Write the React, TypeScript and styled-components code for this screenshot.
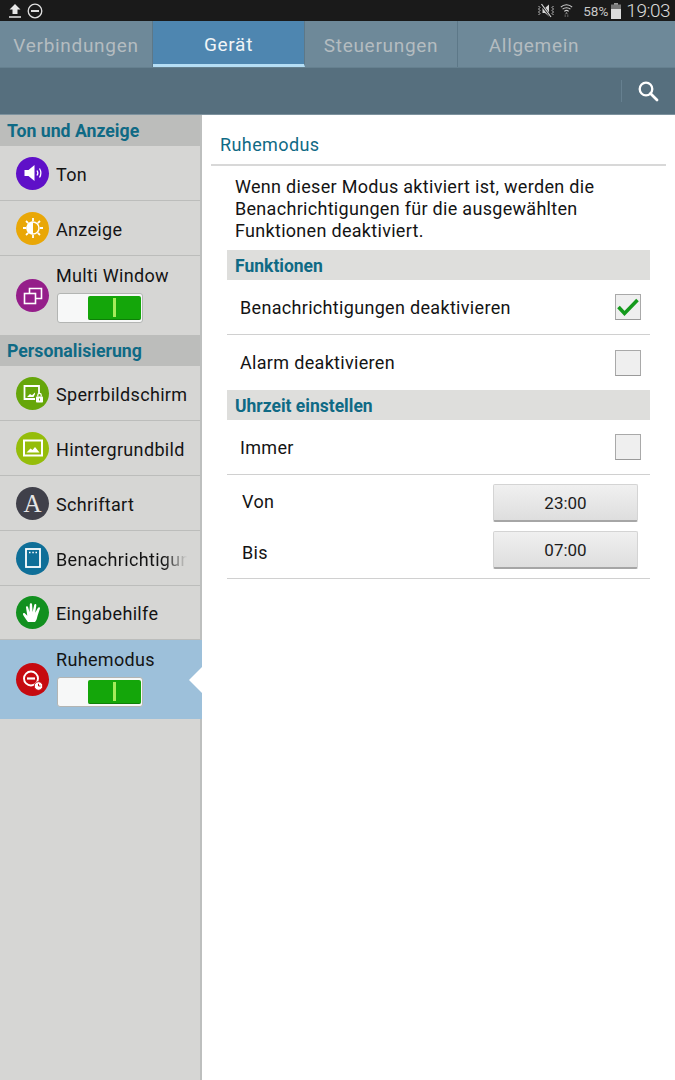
import React from "react";
import styled, { createGlobalStyle } from "styled-components";

const Global = createGlobalStyle`
  html, body { margin: 0; padding: 0; background: #fff; }
  #root { width: 675px; height: 1080px; overflow: hidden; }
  * { box-sizing: border-box; }
`;

const Page = styled.div`
  width: 675px;
  height: 1080px;
  display: flex;
  flex-direction: column;
  font-family: Roboto, "Liberation Sans", sans-serif;
  color: #1a1a1a;
`;

const StatusBar = styled.div`
  height: 21px;
  flex: none;
  background: #1a1a1a;
  display: flex;
  align-items: center;
  justify-content: space-between;
  padding: 0 5px 0 8px;
`;

const StatusGroup = styled.div<{ $gap: number }>`
  display: flex;
  align-items: center;
  gap: ${(p) => p.$gap}px;
`;

const Battery = styled.span`
  font-size: 13.5px;
  color: #c8c8c8;
  margin-left: 5px;
`;

const Clock = styled.span`
  font-size: 19px;
  letter-spacing: -0.5px;
  color: #dcdcdc;
  font-weight: 300;
`;

const TabBar = styled.div`
  height: 47px;
  flex: none;
  display: flex;
  background: #6e8999;
  border-bottom: 1px solid #65808f;
`;

const Tab = styled.div<{ $active?: boolean; $w: number }>`
  width: ${(p) => p.$w}px;
  flex: none;
  display: flex;
  align-items: center;
  justify-content: center;
  padding-top: 3px;
  font-size: 19px;
  letter-spacing: 0.7px;
  color: ${(p) => (p.$active ? "#f1f5f7" : "#b4bcc0")};
  background: ${(p) => (p.$active ? "#4e86b0" : "transparent")};
  border-right: 1px solid #5d7888;
  border-bottom: ${(p) => (p.$active ? "3px solid #b5def5" : "none")};
`;

const LastTab = styled(Tab)`
  border-right: none;
`;

const ActionBar = styled.div`
  height: 47px;
  flex: none;
  background: #566f7e;
  display: flex;
  align-items: center;
  justify-content: flex-end;
  border-bottom: 1px solid #7d929e;
  padding-right: 16px;
`;

const ActionDivider = styled.div`
  width: 1px;
  height: 22px;
  background: #668090;
  margin-right: 15px;
`;

const Body = styled.div`
  flex: 1;
  display: flex;
  min-height: 0;
`;

const Sidebar = styled.div`
  width: 202px;
  flex: none;
  background: #d6d6d4;
  border-right: 2px solid #bdbfbe;
  display: flex;
  flex-direction: column;
`;

const SideHeader = styled.div`
  height: 31px;
  flex: none;
  background: #bcbdbb;
  color: #0f6a85;
  font-weight: 700;
  font-size: 17.7px;
  padding: 1px 0 0 7px;
  display: flex;
  align-items: center;
`;

const SideRow = styled.div<{ $h: number; $selected?: boolean; $flush?: boolean }>`
  height: ${(p) => p.$h}px;
  flex: none;
  position: relative;
  display: flex;
  align-items: center;
  gap: 7px;
  padding-left: 16px;
  background: ${(p) => (p.$selected ? "#9dc0da" : "transparent")};
  border-bottom: ${(p) => (p.$selected || p.$flush ? "none" : "1px solid #bcbdbb")};
  margin-right: ${(p) => (p.$selected ? "-2px" : "0")};
`;

const IconDisc = styled.div<{ $bg: string }>`
  width: 33px;
  height: 33px;
  flex: none;
  border-radius: 50%;
  background: ${(p) => p.$bg};
  display: flex;
  align-items: center;
  justify-content: center;
`;

const RowLabel = styled.div<{ $fade?: boolean; $pad: number }>`
  font-size: 18px;
  letter-spacing: 0.33px;
  padding-top: ${(p) => p.$pad}px;
  color: #141414;
  white-space: nowrap;
  width: 131px;
  overflow: hidden;
  ${(p) =>
    p.$fade
      ? "-webkit-mask-image: linear-gradient(to right, #000 108px, transparent 131px); mask-image: linear-gradient(to right, #000 108px, transparent 131px);"
      : ""}
`;

const RowStack = styled.div`
  display: flex;
  flex-direction: column;
  gap: 7px;
  margin-top: -5px;
`;

const Toggle = styled.div`
  width: 86px;
  height: 30px;
  margin-left: 1px;
  border: 1px solid #b3b5b3;
  border-radius: 3px;
  background: #f7f8f8;
  padding: 2px 1px 2px 0;
  display: flex;
  justify-content: flex-end;
`;

const ToggleThumb = styled.div`
  width: 53px;
  height: 100%;
  background: #14a60a;
  border-radius: 2px;
  border-bottom: 1px solid #0e7f08;
  display: flex;
  align-items: center;
  justify-content: center;
`;

const ThumbGrip = styled.div`
  width: 3px;
  height: 19px;
  background: #a5ec5a;
`;

const Pointer = styled.div`
  position: absolute;
  right: 0;
  top: 27px;
  width: 0;
  height: 0;
  border-top: 13px solid transparent;
  border-bottom: 13px solid transparent;
  border-right: 13px solid #fff;
`;

const Main = styled.div`
  flex: 1;
  min-width: 0;
  padding-left: 9px;
  display: flex;
  flex-direction: column;
  background: #fff;
`;

const Title = styled.div`
  width: 455px;
  height: 51px;
  flex: none;
  padding: 19px 0 0 9px;
  font-size: 18px;
  letter-spacing: 0.4px;
  color: #0f6a85;
  border-bottom: 2px solid #d8d8d8;
  line-height: 21px;
`;

const Content = styled.div`
  width: 423px;
  margin-left: 16px;
  display: flex;
  flex-direction: column;
`;

const Description = styled.div`
  height: 84px;
  flex: none;
  padding: 10px 8px 0 8px;
  font-size: 18px;
  letter-spacing: 0.3px;
  line-height: 22px;
  color: #141414;
`;

const GroupHeader = styled.div`
  height: 30px;
  flex: none;
  background: #dededc;
  color: #0f6a85;
  font-weight: 700;
  font-size: 17.5px;
  padding: 1px 0 0 8px;
  display: flex;
  align-items: center;
`;

const CheckRow = styled.div<{ $h: number; $flush?: boolean }>`
  height: ${(p) => p.$h}px;
  flex: none;
  display: flex;
  align-items: center;
  justify-content: space-between;
  padding: 0 9px 0 13px;
  font-size: 18px;
  letter-spacing: 0.32px;
  color: #141414;
  border-bottom: ${(p) => (p.$flush ? "none" : "1px solid #d0d0d0")};
`;

const CheckBox = styled.div`
  width: 26px;
  height: 26px;
  position: relative;
  background: #efefef;
  border: 1px solid #a9a9a9;
  border-bottom-color: #9a9a9a;
  display: flex;
  align-items: center;
  justify-content: center;
`;

const TimeRow = styled.div<{ $h: number; $line?: boolean; $pad: number }>`
  height: ${(p) => p.$h}px;
  flex: none;
  display: flex;
  align-items: flex-start;
  justify-content: space-between;
  padding: ${(p) => p.$pad}px 12px 0 15px;
  font-size: 18px;
  letter-spacing: 0.32px;
  color: #141414;
  border-bottom: ${(p) => (p.$line ? "1px solid #d0d0d0" : "none")};
`;

const TimeLabel = styled.span<{ $lh: number }>`
  line-height: ${(p) => p.$lh}px;
`;

const TimeButton = styled.div`
  width: 145px;
  height: 38px;
  display: flex;
  align-items: center;
  justify-content: center;
  font-size: 17px;
  letter-spacing: 0;
  color: #1c1c1c;
  background: linear-gradient(#f0f0f0, #dedede);
  border: 1px solid #d4d4d4;
  border-bottom: 2px solid #a6a6a6;
  border-radius: 2px;
`;

const ico = { fill: "none", stroke: "#fff", strokeWidth: 1.6 } as const;

const Icons: Record<string, React.ReactNode> = {
  ton: (
    <svg width="22" height="22" viewBox="0 0 22 22">
      <path d="M2.500 8h4l6-5v16l-6-5h-4z" fill="#fff" />
      <path d="M15 8.500c1 1.500 1 3.500 0 5M17.500 6.500c1.800 3 1.800 6 0 9" {...ico} strokeWidth={1.3} />
    </svg>
  ),
  anzeige: (
    <svg width="24" height="24" viewBox="0 0 24 24">
      <circle cx="12" cy="12" r="6" fill="#e9a707" stroke="#fff" strokeWidth="1.500" />
      <path d="M12 5.500a6.500 6.500 0 0 0 0 13z" fill="#fff" />
      <path d="M12 2v3M12 19v3M2 12h3M19 12h3M5 5l2.200 2.200M16.800 16.800 19 19M5 19l2.200-2.200M16.800 7.200 19 5" {...ico} strokeWidth={1.8} />
    </svg>
  ),
  multi: (
    <svg width="20" height="20" viewBox="0 0 20 20">
      <rect x="1.500" y="7.500" width="11" height="10" {...ico} />
      <path d="M6.500 7.500v-5h12v10h-6" {...ico} />
    </svg>
  ),
  sperr: (
    <svg width="24" height="24" viewBox="0 0 24 24">
      <path d="M14 18H3.500V5H18v8" fill="none" stroke="#fff" strokeWidth="1.800" />
      <path d="M6 16l3-3 2 1.200 3-2.700v1.500L12.500 16z" fill="#fff" />
      <rect x="15" y="15.500" width="7" height="6" rx=".8" fill="#fff" />
      <path d="M16.800 15.500V14a1.700 1.700 0 0 1 3.400 0v1.500" fill="none" stroke="#fff" strokeWidth="1.200" />
      <rect x="18" y="17.500" width="1" height="2" fill="#66a60a" />
    </svg>
  ),
  hinter: (
    <svg width="20" height="18" viewBox="0 0 20 18">
      <rect x="1" y="1.500" width="18" height="15" fill="none" stroke="#fff" strokeWidth="2" />
      <path d="M3.500 13.500l4-4 2 1.500 2.500-3 4.500 5.500z" fill="#fff" />
    </svg>
  ),
  benach: (
    <svg width="18" height="22" viewBox="0 0 18 22">
      <rect x="2" y="2" width="14" height="18" fill="none" stroke="#fff" strokeWidth="1.800" />
      <path d="M5 5.500h1.500M8.300 5.500h1.500M11.500 5.500H13" stroke="#fff" strokeWidth="1.600" />
    </svg>
  ),
  hand: (
    <svg width="24" height="24" viewBox="0 0 24 24">
      <path d="M7 21c-1.500-2-4.500-6-5-7.500-.4-1.200 1-2 2-1l2.300 2.300L5 6.500c-.2-1.500 1.800-1.800 2.100-.3L8.500 11 8.800 3.500c0-1.600 2.200-1.600 2.300 0L11.600 11l1.600-7c.3-1.500 2.300-1.200 2.100.4L14.200 11.800l2.800-5c.7-1.300 2.500-.5 1.900.9L16.500 15c-.4 2-1 4.500-2.500 6z" fill="#fff" />
    </svg>
  ),
  ruhe: (
    <svg width="24" height="24" viewBox="0 0 24 24">
      <circle cx="10" cy="10.500" r="7" fill="none" stroke="#fff" strokeWidth="1.900" />
      <path d="M6 10.500h8" stroke="#fff" strokeWidth="2.200" />
      <circle cx="17.500" cy="18" r="4.300" fill="#fff" stroke="#c60a10" strokeWidth="1" />
      <path d="M17.500 15.800V18h2" fill="none" stroke="#c60a10" strokeWidth="1" />
    </svg>
  ),
};

const FontGlyph = styled.span`
  font-family: "Liberation Serif", serif;
  font-size: 25px;
  color: #e6e6e6;
  line-height: 1;
`;

const Row = ({
  bg,
  icon,
  label,
  fade,
  h = 55,
  pad = 3,
}: {
  bg: string;
  icon: React.ReactNode;
  label: string;
  fade?: boolean;
  h?: number;
  pad?: number;
}) => (
  <SideRow $h={h}>
    <IconDisc $bg={bg}>{icon}</IconDisc>
    <RowLabel $fade={fade} $pad={pad}>
      {label}
    </RowLabel>
  </SideRow>
);

const Switch = () => (
  <Toggle>
    <ToggleThumb>
      <ThumbGrip />
    </ToggleThumb>
  </Toggle>
);

export default function App() {
  return (
    <Page>
      <Global />
      <StatusBar>
        <StatusGroup $gap={5}>
          <svg width="14" height="16" viewBox="0 0 14 16">
            <path d="M7 1l5.500 5.500H9.500V11h-5V6.500H1.500z" fill="#e8e8e8" />
            <path d="M1 14h12" stroke="#e8e8e8" strokeWidth="1.500" />
          </svg>
          <svg width="16" height="16" viewBox="0 0 16 16">
            <circle cx="8" cy="8" r="6.800" fill="none" stroke="#e0e0e0" strokeWidth="1.300" />
            <path d="M4 8h8" stroke="#e0e0e0" strokeWidth="2" />
          </svg>
        </StatusGroup>
        <StatusGroup $gap={5}>
          <svg width="18" height="15" viewBox="0 0 18 15">
            <path d="M5.500 5h2.500l4-3.500v12L8 10H5.500z" fill="#d6d6d6" />
            <path d="M4 1l10 13" stroke="#1a1a1a" strokeWidth="2.500" />
            <path d="M4.500 1l9.500 13" stroke="#d6d6d6" strokeWidth="1.200" />
            <path d="M1.500 3L3 4.500 1.500 6 3 7.500 1.500 9 3 10.500 1.500 12M16.500 3L15 4.500 16.500 6 15 7.500 16.500 9 15 10.500 16.500 12" fill="none" stroke="#bdbdbd" strokeWidth="1" />
          </svg>
          <svg width="13" height="17" viewBox="0 0 15 17">
            <path d="M1 4.500c3.500-3.600 9.500-3.600 13 0M3 7c2.500-2.300 6.500-2.300 9 0M5 9.500c1.400-1.200 3.600-1.200 5 0" fill="none" stroke="#cfcfcf" strokeWidth="1.300" />
            <path d="M7.500 10.500 6 12h3z" fill="#cfcfcf" />
            <path d="M6 13v3M9 16v-3" stroke="#6f6f6f" strokeWidth="1" />
          </svg>
          <Battery>58%</Battery>
          <svg width="10" height="16" viewBox="0 0 10 16" style={{ marginLeft: -2 }}>
            <rect x="3" y="0" width="4" height="2" fill="#9a9a9a" />
            <rect x="0" y="1.500" width="10" height="5.500" fill="#777" />
            <rect x="0" y="6" width="10" height="10" fill="#dcdcdc" />
          </svg>
          <Clock>19:03</Clock>
        </StatusGroup>
      </StatusBar>
      <TabBar>
        <Tab $w={153}>Verbindungen</Tab>
        <Tab $w={152} $active>
          Gerät
        </Tab>
        <Tab $w={153}>Steuerungen</Tab>
        <LastTab $w={152}>Allgemein</LastTab>
      </TabBar>
      <ActionBar>
        <ActionDivider />
        <svg width="22" height="22" viewBox="0 0 22 22">
          <circle cx="9" cy="9" r="6.300" fill="none" stroke="#fff" strokeWidth="2.300" />
          <path d="M13.500 13.500 20 20" stroke="#fff" strokeWidth="2.800" strokeLinecap="round" />
        </svg>
      </ActionBar>
      <Body>
        <Sidebar>
          <SideHeader>Ton und Anzeige</SideHeader>
          <Row bg="#5f10c8" icon={Icons.ton} label="Ton" />
          <Row bg="#e9a707" icon={Icons.anzeige} label="Anzeige" />
          <SideRow $h={79} $flush>
            <IconDisc $bg="#951e8a">{Icons.multi}</IconDisc>
            <RowStack>
              <RowLabel $pad={1}>Multi Window</RowLabel>
              <Switch />
            </RowStack>
          </SideRow>
          <SideHeader>Personalisierung</SideHeader>
          <Row bg="#66a60a" icon={Icons.sperr} label="Sperrbildschirm" />
          <Row bg="#95bd0a" icon={Icons.hinter} label="Hintergrundbild" />
          <Row bg="#40404a" icon={<FontGlyph>A</FontGlyph>} label="Schriftart" />
          <Row bg="#0f6f98" icon={Icons.benach} label="Benachrichtigungsfeld" fade />
          <Row bg="#12901f" icon={Icons.hand} label="Eingabehilfe" h={54} pad={1} />
          <SideRow $h={79} $selected>
            <IconDisc $bg="#c60a10">{Icons.ruhe}</IconDisc>
            <RowStack>
              <RowLabel $pad={1}>Ruhemodus</RowLabel>
              <Switch />
            </RowStack>
            <Pointer />
          </SideRow>
        </Sidebar>
        <Main>
          <Title>Ruhemodus</Title>
          <Content>
            <Description>
              Wenn dieser Modus aktiviert ist, werden die Benachrichtigungen für die ausgewählten Funktionen deaktiviert.
            </Description>
            <GroupHeader>Funktionen</GroupHeader>
            <CheckRow $h={55}>
              Benachrichtigungen deaktivieren
              <CheckBox>
                <svg width="24" height="20" viewBox="0 0 24 20">
                  <path d="M2.500 10l6 6.500L21.500 3" fill="none" stroke="#149a1c" strokeWidth="3.600" />
                </svg>
              </CheckBox>
            </CheckRow>
            <CheckRow $h={55} $flush>
              Alarm deaktivieren
              <CheckBox />
            </CheckRow>
            <GroupHeader>Uhrzeit einstellen</GroupHeader>
            <CheckRow $h={55}>
              Immer
              <CheckBox />
            </CheckRow>
            <TimeRow $h={46} $pad={9}>
              <TimeLabel $lh={36}>Von</TimeLabel>
              <TimeButton>23:00</TimeButton>
            </TimeRow>
            <TimeRow $h={58} $pad={10} $line>
              <TimeLabel $lh={44}>Bis</TimeLabel>
              <TimeButton>07:00</TimeButton>
            </TimeRow>
          </Content>
        </Main>
      </Body>
    </Page>
  );
}
